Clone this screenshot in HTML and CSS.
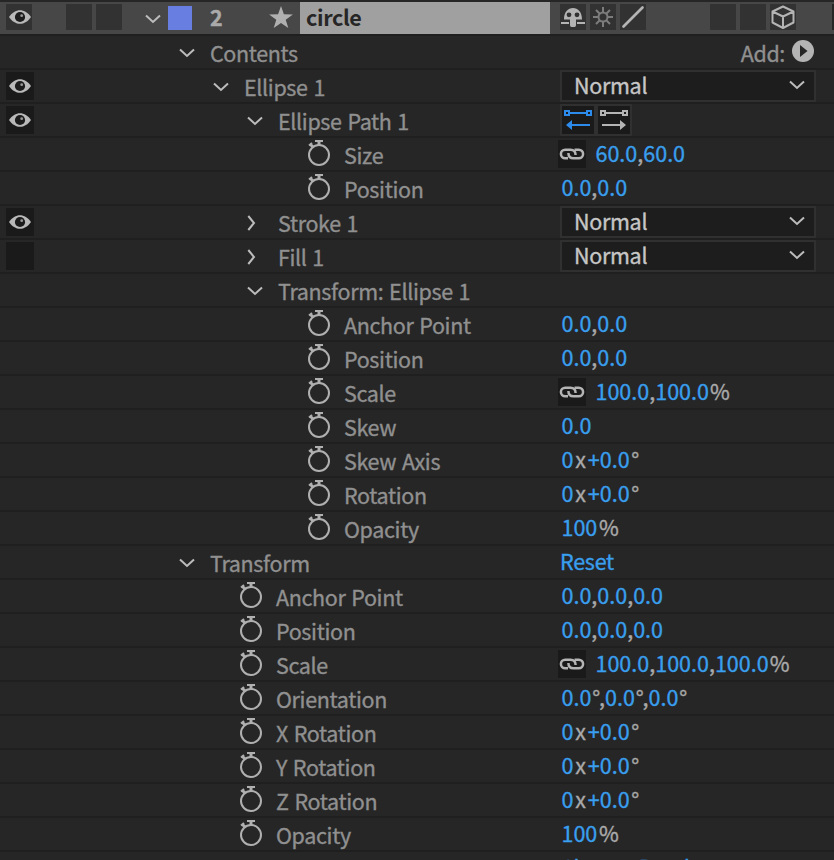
FILE: index.html
```html
<!DOCTYPE html>
<html lang="en">
<head>
<meta charset="utf-8">
<title>Timeline</title>
<link rel="stylesheet" href="styles.css">
</head>
<body>
<svg class="defs" width="0" height="0">
  <symbol id="eye" viewBox="0 0 22 14"><path fill="#b9b9b9" d="M0 7C3 2.400 7 .2 11 .2S19 2.400 22 7C19 11.600 15 13.800 11 13.800S3 11.600 0 7Z"/><circle cx="11" cy="7" r="5.100" fill="#1c1c1c"/><circle cx="12.700" cy="5.700" r="1.400" fill="#999"/></symbol>
  <symbol id="down" viewBox="0 0 16 10"><path fill="none" stroke="#bcbcbc" stroke-width="2" d="M1 1.500 8 8l7-6.500"/></symbol>
  <symbol id="right" viewBox="0 0 10 16"><path fill="none" stroke="#bcbcbc" stroke-width="2" d="M1.300 1 7 8l-5.700 7"/></symbol>
  <symbol id="watch" viewBox="0 0 24 28"><g fill="none" stroke="#b0b0b0" stroke-width="2"><circle cx="11" cy="16" r="10"/><path d="M7 2h8M1 6.500l3-2.500"/><path stroke-width="3" d="M11 2v4M2.500 5.500 5 8"/></g></symbol>
  <symbol id="link" viewBox="0 0 26 12"><g fill="none" stroke="#b4b4b4" stroke-width="2.500"><path d="M9 10.300H6.200A4.300 4.300 0 0 1 6.200 1.700H11.500C14.500 1.700 16.600 3.500 16.600 7"/><path d="M15.500 1.700H19.800A4.300 4.300 0 0 1 19.800 10.300H14.500C11.500 10.300 9.400 8.500 9.400 5"/></g></symbol>
  <symbol id="path" viewBox="0 0 28 22"><g fill="none" stroke="currentColor" stroke-width="2"><path d="M5 4h18M3 16h23"/><path d="M1 2h4v4H1zM23 2h4v4h-4z"/></g><path fill="currentColor" d="M2 16l6-5v10z"/></symbol>
  <symbol id="path-rev" viewBox="0 0 28 22"><g fill="none" stroke="currentColor" stroke-width="2"><path d="M5 4h18M2 16h20"/><path d="M1 2h4v4H1zM23 2h4v4h-4z"/></g><path fill="currentColor" d="M26 16l-6-5v10z"/></symbol>
</svg>
<main class="timeline">
  <div class="row layer">
    <span class="toggle"><svg class="eye"><use href="#eye"/></svg></span>
    <span class="box audio"></span><span class="box"></span>
    <svg class="chev"><use href="#down"/></svg>
    <span class="swatch"></span>
    <span class="index">2</span>
    <svg class="star" viewBox="0 0 24 22"><path fill="#b0b0b0" d="M12 0l2.900 8.200 9 .2-7.200 5.300 2.600 8.300-7.300-4.900L4.700 22l2.600-8.300L.1 8.400l9-.2z"/></svg>
    <span class="title">circle</span>
    <span class="box shy"><svg width="26" height="26" viewBox="0 0 26 26"><path fill="#b4b4b4" d="M4 15.500C4 8 8 4 13 4s9 4 9 11.500h-6V21q0 2-1.500 2h-3Q10 23 10 21v-5.500zM1 18h8v2H1zM17 18h8v2h-8z"/><circle cx="9" cy="10.800" r="2.400" fill="#323232"/><circle cx="17" cy="10.800" r="2.400" fill="#323232"/></svg></span>
    <span class="box"><svg width="26" height="26" viewBox="0 0 26 26"><g fill="none" stroke="#7c7c7c" stroke-width="2"><circle cx="13" cy="13" r="4.500"/><path d="M13 3v5M13 18v5M3 13h5M18 13h5M6 6l3.500 3.500M16.500 16.500 20 20M20 6l-3.500 3.500M9.500 16.500 6 20"/></g></svg></span>
    <span class="box"><svg width="26" height="26" viewBox="0 0 26 26"><path stroke="#b4b4b4" stroke-width="2.700" stroke-linecap="round" d="M3.500 22.500l19-19"/></svg></span>
    <span class="box blur"></span><span class="box"></span>
    <span class="box"><svg width="26" height="26" viewBox="0 0 26 26"><path fill="none" stroke="#b4b4b4" stroke-width="2" stroke-linejoin="round" d="M13 2.500 23.500 7.500v11L13 24 2.500 18.500v-11zM2.500 7.500 13 12.500l10.500-5M13 12.500V24"/></svg></span>
    <span class="box edge"></span>
  </div>
  <div class="row"><div class="tree l1"><svg class="chev"><use href="#down"/></svg><span class="label">Contents</span></div>
    <div class="add"><span class="label">Add:</span><svg width="22" height="22" viewBox="0 0 22 22"><circle cx="11" cy="11" r="11" fill="#b4b4b4"/><path fill="#262626" d="M8 5v12l7.500-6z"/></svg></div></div>
  <div class="row"><span class="toggle"><svg class="eye"><use href="#eye"/></svg></span><div class="tree l2"><svg class="chev"><use href="#down"/></svg><span class="label">Ellipse 1</span></div>
    <div class="select"><span>Normal</span><svg class="chev"><use href="#down"/></svg></div></div>
  <div class="row"><span class="toggle"><svg class="eye"><use href="#eye"/></svg></span><div class="tree l3"><svg class="chev"><use href="#down"/></svg><span class="label">Ellipse Path 1</span></div>
    <div class="dirs"><span class="dir on"><svg><use href="#path"/></svg></span><span class="dir"><svg><use href="#path-rev"/></svg></span></div></div>
  <div class="row"><div class="tree l4"><svg class="watch"><use href="#watch"/></svg><span class="label">Size</span></div><div class="val"><span class="link"><svg><use href="#link"/></svg></span><b>60.0</b>,<b>60.0</b></div></div>
  <div class="row"><div class="tree l4"><svg class="watch"><use href="#watch"/></svg><span class="label">Position</span></div><div class="val"><b>0.0</b>,<b>0.0</b></div></div>
  <div class="row"><span class="toggle"><svg class="eye"><use href="#eye"/></svg></span><div class="tree l3"><svg class="closed"><use href="#right"/></svg><span class="label">Stroke 1</span></div>
    <div class="select"><span>Normal</span><svg class="chev"><use href="#down"/></svg></div></div>
  <div class="row"><span class="toggle"></span><div class="tree l3"><svg class="closed"><use href="#right"/></svg><span class="label">Fill 1</span></div>
    <div class="select"><span>Normal</span><svg class="chev"><use href="#down"/></svg></div></div>
  <div class="row"><div class="tree l3"><svg class="chev"><use href="#down"/></svg><span class="label">Transform: Ellipse 1</span></div></div>
  <div class="row"><div class="tree l4"><svg class="watch"><use href="#watch"/></svg><span class="label">Anchor Point</span></div><div class="val"><b>0.0</b>,<b>0.0</b></div></div>
  <div class="row"><div class="tree l4"><svg class="watch"><use href="#watch"/></svg><span class="label">Position</span></div><div class="val"><b>0.0</b>,<b>0.0</b></div></div>
  <div class="row"><div class="tree l4"><svg class="watch"><use href="#watch"/></svg><span class="label">Scale</span></div><div class="val"><span class="link"><svg><use href="#link"/></svg></span><b>100.0</b>,<b>100.0</b><i>%</i></div></div>
  <div class="row"><div class="tree l4"><svg class="watch"><use href="#watch"/></svg><span class="label">Skew</span></div><div class="val"><b>0.0</b></div></div>
  <div class="row"><div class="tree l4"><svg class="watch"><use href="#watch"/></svg><span class="label">Skew Axis</span></div><div class="val turns"><b>0</b><i>x</i><b>+0.0</b><i>°</i></div></div>
  <div class="row"><div class="tree l4"><svg class="watch"><use href="#watch"/></svg><span class="label">Rotation</span></div><div class="val turns"><b>0</b><i>x</i><b>+0.0</b><i>°</i></div></div>
  <div class="row"><div class="tree l4"><svg class="watch"><use href="#watch"/></svg><span class="label">Opacity</span></div><div class="val turns"><b>100</b><i>%</i></div></div>
  <div class="row"><div class="tree l1"><svg class="chev"><use href="#down"/></svg><span class="label">Transform</span></div><div class="val word"><b>Reset</b></div></div>
  <div class="row"><div class="tree lt"><svg class="watch"><use href="#watch"/></svg><span class="label">Anchor Point</span></div><div class="val"><b>0.0</b>,<b>0.0</b>,<b>0.0</b></div></div>
  <div class="row"><div class="tree lt"><svg class="watch"><use href="#watch"/></svg><span class="label">Position</span></div><div class="val"><b>0.0</b>,<b>0.0</b>,<b>0.0</b></div></div>
  <div class="row"><div class="tree lt"><svg class="watch"><use href="#watch"/></svg><span class="label">Scale</span></div><div class="val"><span class="link"><svg><use href="#link"/></svg></span><b>100.0</b>,<b>100.0</b>,<b>100.0</b><i>%</i></div></div>
  <div class="row"><div class="tree lt"><svg class="watch"><use href="#watch"/></svg><span class="label">Orientation</span></div><div class="val deg"><b>0.0</b><i>°</i>,<b>0.0</b><i>°</i>,<b>0.0</b><i>°</i></div></div>
  <div class="row"><div class="tree lt"><svg class="watch"><use href="#watch"/></svg><span class="label">X Rotation</span></div><div class="val turns"><b>0</b><i>x</i><b>+0.0</b><i>°</i></div></div>
  <div class="row"><div class="tree lt"><svg class="watch"><use href="#watch"/></svg><span class="label">Y Rotation</span></div><div class="val turns"><b>0</b><i>x</i><b>+0.0</b><i>°</i></div></div>
  <div class="row"><div class="tree lt"><svg class="watch"><use href="#watch"/></svg><span class="label">Z Rotation</span></div><div class="val turns"><b>0</b><i>x</i><b>+0.0</b><i>°</i></div></div>
  <div class="row"><div class="tree lt"><svg class="watch"><use href="#watch"/></svg><span class="label">Opacity</span></div><div class="val turns"><b>100</b><i>%</i></div></div>
  <div class="row"><div class="tree l1"></div><div class="val word last"><b>Change Renderer...</b></div></div>
</main>
</body>
</html>
```
FILE: styles.css
```css
* { box-sizing: border-box; }
body { margin: 0; background: #262626; }
.defs { display: block; height: 0; }
svg { display: block; flex: none; }
.timeline {
  width: 834px; height: 860px; overflow: hidden;
  border-top: 2px solid #262626;
  font: 21.5px/33px "Noto Sans CJK SC", "Noto Sans", sans-serif;
  -webkit-text-stroke: 0.35px currentColor;
  color: #909090;
}
.row { display: flex; height: 34px; border-bottom: 2px solid #1f1f1f; white-space: nowrap; }
.toggle { flex: none; width: 28px; height: 28px; margin: 2px -34px 0 6px; background: #1a1a1a; }
.eye { width: 22px; height: 14px; margin: 7px 0 0 3px; }
.tree { flex: none; width: 560px; display: flex; }
.l1 { padding-left: 179px; }
.l2 { padding-left: 213px; }
.l3 { padding-left: 247px; }
.l4 { padding-left: 308px; }
.lt { padding-left: 240px; }
.chev { width: 16px; height: 10px; margin: 12px 15px 0 0; }
.closed { width: 10px; height: 16px; margin: 9px 21px 0 0; }
.watch { width: 24px; height: 28px; margin: 1px 12px 0 0; }
.label { letter-spacing: -0.35px; word-spacing: 1.3px; }

.layer { background: #474747; color: #aaa; }
.box { flex: none; width: 26px; height: 26px; margin: 2px 4px 0 0; background: #323232; }
.layer .toggle { width: 26px; height: 26px; margin-right: 34px; background: #323232; }
.layer .eye { margin-top: 6px; margin-left: 3px; }
.layer .chev { margin: 12px 7px 0 19px; }
.swatch { flex: none; width: 24px; height: 24px; margin-top: 4px; background: #687ee0; }
.index { width: 60px; padding-left: 18px; margin-right: 17px; font-weight: 700; line-height: 30px; }
.star { width: 24px; height: 22px; margin: 4px 7px 0 0; }
.title { flex: none; width: 250px; padding-left: 6px; background: #a0a0a0; color: #262626; font-weight: 700; line-height: 30px; letter-spacing: -0.35px; -webkit-text-stroke: 0; }
.shy { margin-left: 10px; }
.blur { margin-left: 60px; }
.edge { margin-left: 32px; width: 2px; margin-right: 0; background: #262626; }

.add { display: flex; width: 256px; justify-content: flex-end; }
.add svg { margin: 4px 2px 0 7px; }
.select {
  display: flex; justify-content: space-between;
  width: 256px; height: 32px; padding-left: 12px;
  border: 2px solid #303030; background: #1d1d1d; color: #c6c6c6; line-height: 26px; letter-spacing: -0.3px;
}
.select .chev { margin: 8px 9px 0 0; }
.dirs { display: flex; gap: 4px; width: 72px; height: 32px; padding: 2px; background: #303030; }
.dir { width: 32px; height: 28px; padding: 3px 2px; background: #1a1a1a; color: #b4b4b4; }
.dir svg { width: 28px; height: 22px; }
.on { color: #2d8ceb; }
.val { display: flex; padding-left: 1.5px; line-height: 30px; color: #aaa; }
.val b { font-weight: 400; color: #399fee; }
.val i { font-style: normal; margin-left: 1px; }
.turns i { margin: 0 2px 0 1.7px; }
.deg i { margin: 0 -1.3px 0 1px; }
.link { width: 28px; height: 28px; margin: 2px 9.5px 0 -3.5px; padding: 8px 1px; background: #1a1a1a; }
.link svg { width: 26px; height: 12px; }
.val.word { padding-left: 0; letter-spacing: -0.25px; }
.last { line-height: 29px; }
```
